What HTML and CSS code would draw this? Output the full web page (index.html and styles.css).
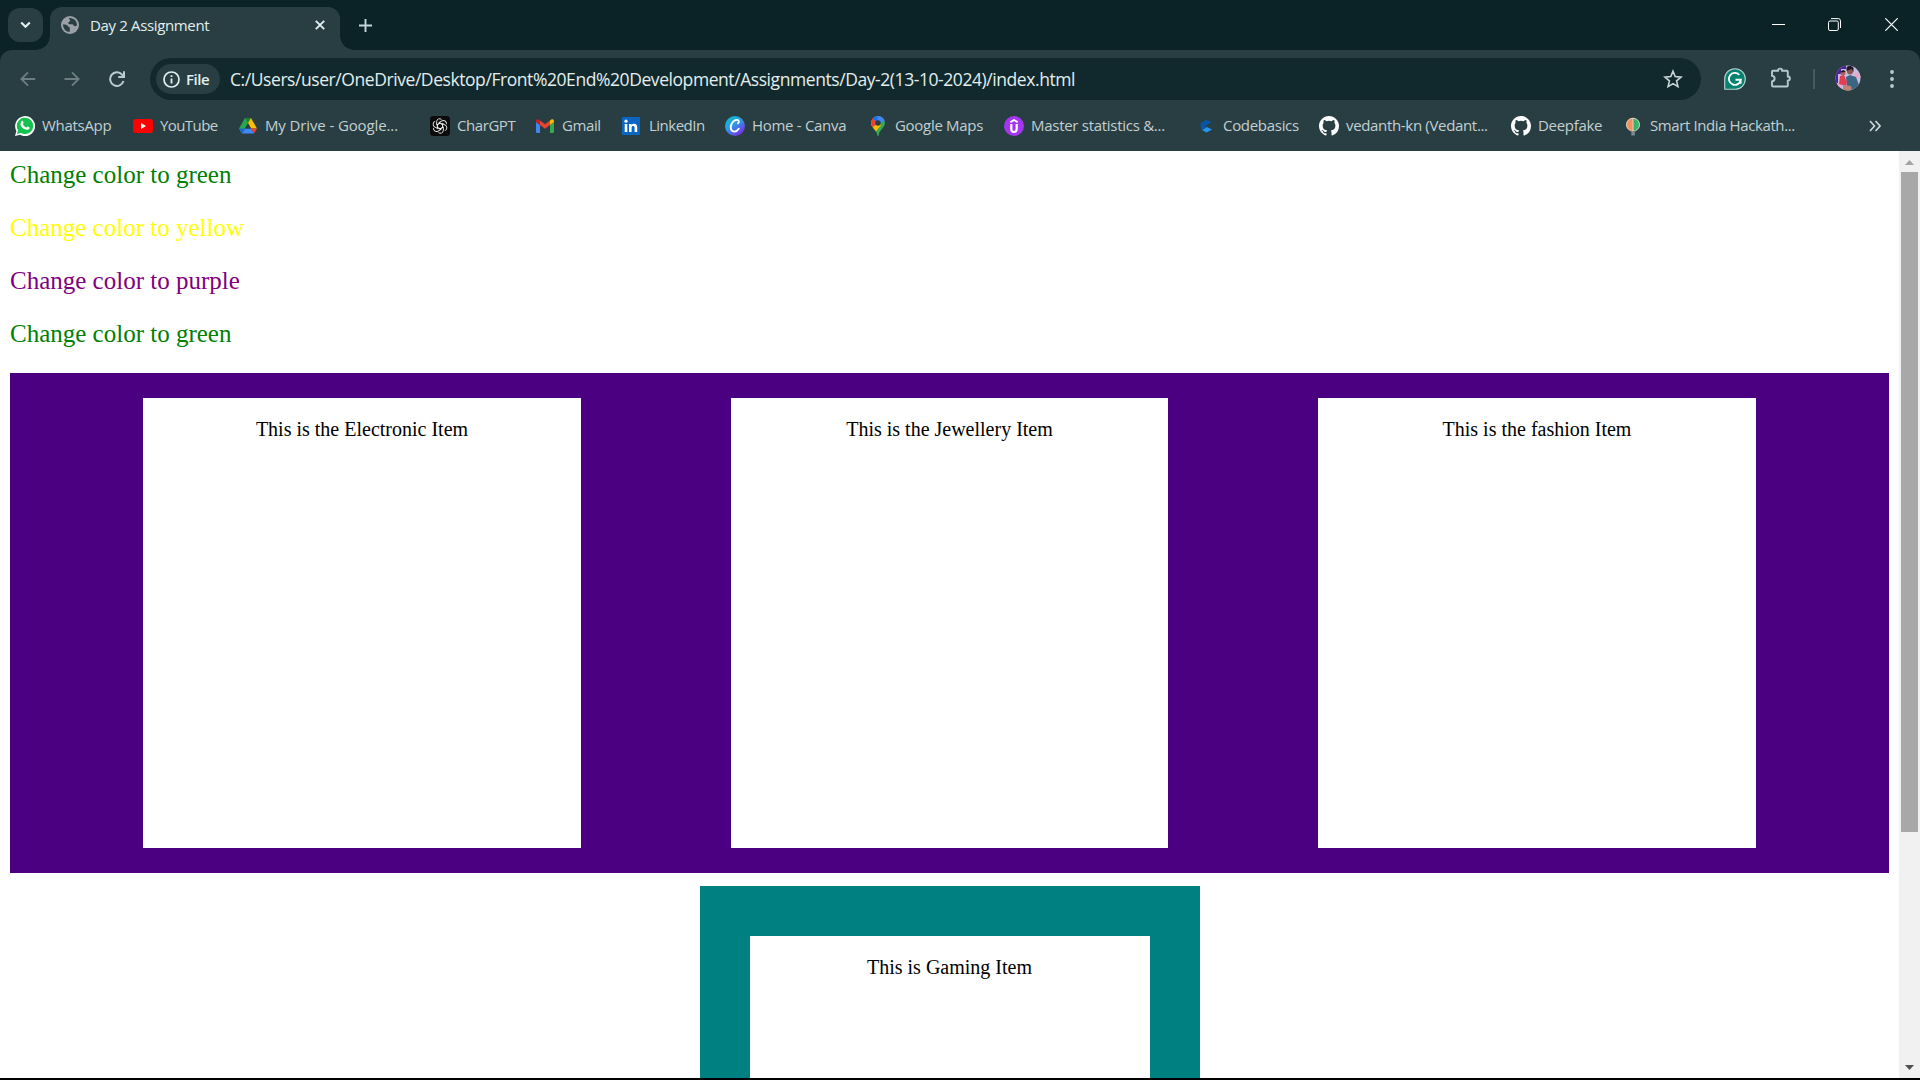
FILE: index.html
```html
<!DOCTYPE html>
<html lang="en">
<head>
<meta charset="utf-8">
<title>Day 2 Assignment</title>
<link rel="stylesheet" href="styles.css">
</head>
<body>
<div class="window">
  <header class="chrome">
    <div class="titlebar">
      <button class="tab-search" aria-label="Search tabs"><svg width="11" height="8" viewBox="0 0 11 8"><path d="M1.2 1.5 5.5 5.8 9.8 1.5" fill="none" stroke="#e3eeee" stroke-width="2.2"/></svg></button>
      <div class="tab">
        <svg class="tab-icon" width="18" height="18" viewBox="0 0 18 18"><circle cx="9" cy="9" r="9" fill="#9aa0a6"/><path d="M2 8.2c2.200.300 4.200.200 4.600 1.600.400 1.400 2.200.800 2.200 2.200v3.800C5 16 2 12.800 2 8.200zM8 2c-.2 1.700 1.300 1 1.200 2.500C9.100 6 7 5.600 7.300 7.200c.2 1.400 2.500.800 4 1 1.500.200 1.300 2 2.700 2 1 0 1.300-.6 2-.6C16.300 5.500 13 1.700 8 2z" fill="#283e43"/></svg>
        <span class="tab-title">Day 2 Assignment</span>
        <svg class="tab-close" width="10" height="10" viewBox="0 0 10 10"><path d="M.8.8l8.400 8.400M9.200.8.800 9.200" stroke="#e3eeee" stroke-width="1.900"/></svg>
      </div>
      <svg class="new-tab" width="13" height="13" viewBox="0 0 13 13"><path d="M6.500 0v13M0 6.500h13" stroke="#c3d6da" stroke-width="1.900"/></svg>
      <div class="controls">
        <svg width="13" height="13" viewBox="0 0 13 13"><path d="M0 6.500h13" stroke="#fff"/></svg>
        <svg width="13" height="13" viewBox="0 0 13 13"><rect x=".5" y="3" width="9.800" height="9.500" rx="1.500" fill="none" stroke="#fff"/><path d="M3 .6h7.200a2.300 2.300 0 0 1 2.300 2.300V10" fill="none" stroke="#fff"/></svg>
        <svg width="13" height="13" viewBox="0 0 13 13"><path d="M.3.3l12.400 12.400M12.700.3.300 12.700" stroke="#fff" stroke-width="1.200"/></svg>
      </div>
    </div>
    <div class="toolbar">
      <svg class="nav back" width="16" height="16" viewBox="0 0 16 16"><path d="M15.200 8H1.700M8 1.300 1.400 8 8 14.700" fill="none" stroke="#6c7e82" stroke-width="1.900"/></svg>
      <svg class="nav forward" width="16" height="16" viewBox="0 0 16 16"><path d="M.5 8H14M8 1.300 14.600 8 8 14.700" fill="none" stroke="#6c7e82" stroke-width="1.900"/></svg>
      <svg class="nav reload" width="16" height="16" viewBox="0 0 16 16"><path d="M14.500 10a6.800 6.800 0 1 1-1.500-6.500L15 5.500" fill="none" stroke="#b9cdd1" stroke-width="2"/><path d="M15 .3v5.800H9.300" fill="none" stroke="#b9cdd1" stroke-width="2"/></svg>
      <div class="omnibox">
        <div class="chip"><svg width="17" height="17" viewBox="0 0 17 17"><circle cx="8.500" cy="8.500" r="7.500" fill="none" stroke="#e3eeee" stroke-width="1.700"/><path d="M8.500 7.500v5M8.500 4.300v1.800" stroke="#e3eeee" stroke-width="1.800"/></svg><span class="file">File</span></div>
        <span class="url">C:/Users/user/OneDrive/Desktop/Front%20End%20Development/Assignments/Day-2(13-10-2024)/index.html</span>
        <svg class="star" width="20" height="20" viewBox="0 0 20 20"><path d="M10 2.200l2.200 5.400 5.800.5-4.400 3.800 1.300 5.700-4.900-3-4.900 3 1.300-5.700L2 8.100l5.800-.5z" fill="none" stroke="#cbd6d8" stroke-width="1.600"/></svg>
      </div>
      <svg class="grammarly" width="22" height="22" viewBox="0 0 22 22"><path d="M.7 21.300V11A10.300 10.300 0 1 1 11 21.300z" fill="#078170" stroke="#b9d5d3" stroke-width="1.100"/><path d="M15.300 6.800A6 6 0 1 0 16.800 11.800H11.500M16.600 11.800v4" fill="none" stroke="#fff" stroke-width="1.900"/></svg>
      <svg class="puzzle" width="22" height="22" viewBox="0 0 22 22"><path d="M2.500 3.700H8a2.100 2.100 0 0 1 4.200 0h4.600a1 1 0 0 1 1 1V9.500a2.100 2.100 0 0 1 0 4.200v4.800a1 1 0 0 1-1 1H3a1 1 0 0 1-1-1v-4c3.500-.5 3.500-5.300 0-5.800V4.700a1 1 0 0 1 1-1z" fill="none" stroke="#b2cbd1" stroke-width="1.900"/></svg>
      <span class="separator"></span>
      <svg class="avatar" width="26" height="26" viewBox="0 0 26 26"><clipPath id="face"><circle cx="13" cy="13" r="12.500"/></clipPath><g clip-path="url(#face)"><path fill="#c4bfe0" d="M0 0h26v26H0z"/><path fill="#50209a" d="M0 0h11v4H6v5H3v17H0z"/><path fill="#e7a8ca" d="M19 8h7v5h-5zM2 18h5v8H2z"/><path fill="#3b6681" d="M11 12l4-2 6 2 3 8-2 6h-6l-4-5z"/><path fill="#e33d50" d="M5 11l4-1 3 7-1 4-7-2z"/><circle cx="8" cy="8" r="2.500" fill="#a8655c"/><path fill="#211825" d="M5.500 7.500C6 4.500 10 4.500 10.500 7z"/><circle cx="15" cy="6.500" r="3" fill="#8f564f"/><path fill="#211825" d="M11.500 6V2.500C13 .5 17 .5 18.500 3v4l-2-3z"/><path fill="#c18174" d="M8 20l8 1 1 5H8z"/></g></svg>
      <svg class="dots" width="4" height="18" viewBox="0 0 4 18"><g fill="#b9cdd1"><circle cx="2" cy="2" r="1.900"/><circle cx="2" cy="9" r="1.900"/><circle cx="2" cy="16" r="1.900"/></g></svg>
    </div>
    <nav class="bookmarks">
      <div class="bm whatsapp"><svg viewBox="0 0 20 20"><path d="M0 20l1.400-5A10 10 0 1 1 5 18.700z" fill="#fff"/><path d="M2 18l1-3.800A8.200 8.200 0 1 1 5.900 17z" fill="#17c14f"/><path d="M6.500 5.200c1-.8 1.500-.2 2 1.500.2.700-.8 1.200-.5 1.700.9 1.500 1.900 2.400 3.300 3 .5.200 1-1.100 1.500-.9 1.800.8 2.200.9 1.600 2-.8 1.800-3.100 1.700-5.500.3-2.200-1.300-4.800-4.500-2.400-7.600z" fill="#fff"/></svg><span>WhatsApp</span></div>
      <div class="bm youtube"><svg viewBox="0 0 20 20"><rect y="3" width="20" height="14" rx="3" fill="#f00"/><path d="M8 7l5 3-5 3z" fill="#fff"/></svg><span>YouTube</span></div>
      <div class="bm drive"><svg viewBox="0 0 20 20"><path d="M7 2h6L4 17.500 1 12.500z" fill="#29a650"/><path d="M7 2h6l-3 5z" fill="#188038"/><path d="M13 2l6 10.500h-6L10 7z" fill="#fbbc04"/><path d="M4 17.500l3-5h6l3 5z" fill="#4285f4"/><path d="M1 12.500h6l-3 5z" fill="#1967d2"/><path d="M13 12.500h6l-3 5z" fill="#ea4335"/><path d="M10 7.500l3 5H7z" fill="#283e43"/></svg><span>My Drive - Google...</span></div>
      <div class="bm chatgpt"><svg viewBox="0 0 20 20"><rect width="20" height="20" rx="3.500" fill="#0b0b0b"/><g fill="none" stroke="#eee" stroke-width=".9"><path id="petal" d="M12.600 8.500 10 7 6.600 9V5.800A3 3 0 0 1 11.600 3.500"/><use href="#petal" transform="rotate(60 10 10)"/><use href="#petal" transform="rotate(120 10 10)"/><use href="#petal" transform="rotate(180 10 10)"/><use href="#petal" transform="rotate(240 10 10)"/><use href="#petal" transform="rotate(300 10 10)"/></g></svg><span>CharGPT</span></div>
      <div class="bm gmail"><svg viewBox="0 0 20 20"><path d="M1 6l4 3v8H2.200A1.200 1.200 0 0 1 1 15.800z" fill="#4285f4"/><path d="M19 6l-4 3v8h2.800a1.200 1.200 0 0 0 1.200-1.200z" fill="#34a853"/><path d="M5 4.500l5 3.800 5-3.800V9l-5 3.800L5 9z" fill="#ea4335"/><path d="M1 5.200C1 3.200 3 2.900 4 3.700l1 .8V9L1 6z" fill="#c5221f"/><path d="M19 5.200c0-2-2-2.300-3-1.500l-1 .8V9l4-3z" fill="#fbbc04"/></svg><span>Gmail</span></div>
      <div class="bm linkedin"><svg viewBox="0 0 20 20"><rect x="1" y="1" width="18" height="18" rx="1" fill="#0a66c2"/><path d="M3.700 8h2.600v8H3.700zM8 8h2.500v1.100c1.300-2 5.700-1.800 5.700 2V16h-2.600v-4.300c0-2.300-3-2.100-3 0V16H8z" fill="#fff"/><circle cx="5" cy="5.200" r="1.600" fill="#fff"/></svg><span>LinkedIn</span></div>
      <div class="bm canva"><svg viewBox="0 0 20 20"><defs><linearGradient id="cv" x1="0" y1="0" x2=".7" y2="1"><stop stop-color="#00c4cc"/><stop offset=".5" stop-color="#2e9be5"/><stop offset="1" stop-color="#7d2ae8"/></linearGradient></defs><circle cx="10" cy="10" r="10" fill="url(#cv)"/><path d="M12.900 7.400c1.600-1.200 1.200-3.600-1.100-3.500-4 .2-6.600 5.200-6 8.500.7 4 5.500 4.200 8 .4" fill="none" stroke="#fff" stroke-width="1.800" stroke-linecap="round"/></svg><span>Home - Canva</span></div>
      <div class="bm maps"><svg viewBox="0 0 20 20"><clipPath id="pin"><path d="M10 0a7 7 0 0 1 7 7c0 4.500-5.500 6.500-6.300 12.200-.2 1.100-1.200 1.100-1.400 0C8.500 13.500 3 11.500 3 7a7 7 0 0 1 7-7z"/></clipPath><g clip-path="url(#pin)"><path fill="#34a853" d="M0 0h20v20H0z"/><path fill="#fbbc04" d="M0 5l10 1 3 3-7 9H0z"/><path fill="#ea4335" d="M0 0h6l4 7-5 4-5-1z"/><path fill="#1a73e8" d="M4 2l4-3h4l-2 8z"/><path fill="#4285f4" d="M9-1h6l4 4-9 6z"/></g><circle cx="10" cy="7" r="2.700" fill="#283e43"/></svg><span>Google Maps</span></div>
      <div class="bm udemy"><svg viewBox="0 0 20 20"><circle cx="10" cy="10" r="10" fill="#a435f0"/><path d="M6.300 6.200L10 4l3.700 2.200" fill="none" stroke="#fff" stroke-width="1.900"/><path d="M7.300 8v5c0 4 5.400 4 5.400 0V8" fill="none" stroke="#fff" stroke-width="2.200"/></svg><span>Master statistics &amp;...</span></div>
      <div class="bm codebasics"><svg viewBox="0 0 20 20"><path d="M4.500 7L10 3.700 15.500 6 11 9 9.500 11.500 5 14z" fill="#0755a3"/><path d="M6 14l5-3 5 2.500-5.500 3z" fill="#2196f3"/></svg><span>Codebasics</span></div>
      <div class="bm github"><svg viewBox="0 0 16 16"><path id="octo" fill="#fff" d="M8 0C3.580 0 0 3.580 0 8c0 3.540 2.290 6.530 5.470 7.590.4.070.55-.17.55-.38 0-.19-.01-.82-.01-1.490-2.010.37-2.530-.49-2.690-.94-.09-.23-.48-.94-.82-1.130-.28-.15-.68-.52-.01-.53.63-.01 1.080.58 1.230.82.72 1.210 1.870.87 2.330.66.07-.52.28-.87.51-1.070-1.780-.2-3.640-.89-3.640-3.950 0-.87.31-1.590.82-2.150-.08-.2-.36-1.020.08-2.120 0 0 .67-.21 2.200.82a7.420 7.420 0 0 1 4 0c1.530-1.040 2.200-.82 2.200-.82.44 1.100.16 1.920.08 2.120.51.56.82 1.270.82 2.150 0 3.070-1.870 3.750-3.650 3.950.29.25.54.73.54 1.480 0 1.070-.01 1.930-.01 2.200 0 .21.15.46.55.38A8.010 8.010 0 0 0 16 8c0-4.420-3.580-8-8-8z"/></svg><span>vedanth-kn (Vedant...</span></div>
      <div class="bm deepfake"><svg viewBox="0 0 16 16"><use href="#octo"/></svg><span>Deepfake</span></div>
      <div class="bm sih"><svg viewBox="0 0 20 20"><path d="M10 2C6 2 3.300 5 3.300 8.500S6 15 10 15z" fill="#f0925e"/><path d="M10 2c4 0 6.700 3 6.700 6.500S14 15 10 15z" fill="#39b36b"/><path d="M10 2v13" stroke="#f3ede3" stroke-width=".7"/><circle cx="10" cy="8.700" r="6.500" fill="none" stroke="#dcdcd2" stroke-width=".9"/><path d="M8.300 16h3.600v3.500H8.300z" fill="#7c8b90"/></svg><span>Smart India Hackath...</span></div>
      <svg class="overflow" width="12" height="12" viewBox="0 0 12 12"><path d="M1 1l4.500 5L1 11M6.500 1 11 6l-4.500 5" fill="none" stroke="#cbd6d8" stroke-width="1.700"/></svg>
    </nav>
  </header>
  <div class="viewport">
    <main class="page">
      <p class="line green">Change color to green</p>
      <p class="line yellow">Change color to yellow</p>
      <p class="line purple">Change color to purple</p>
      <p class="line green">Change color to green</p>
      <section class="items">
        <div class="item"><p>This is the Electronic Item</p></div>
        <div class="item"><p>This is the Jewellery Item</p></div>
        <div class="item"><p>This is the fashion Item</p></div>
      </section>
      <section class="gaming"><div class="gaming-item"><p>This is Gaming Item</p></div></section>
    </main>
    <div class="scrollbar">
      <svg width="9" height="5" viewBox="0 0 9 5"><path d="M0 5l4.500-5L9 5z" fill="#a3a3a3"/></svg>
      <div class="thumb"></div>
      <svg class="down" width="9" height="5" viewBox="0 0 9 5"><path d="M0 0l4.500 5L9 0z" fill="#505050"/></svg>
    </div>
  </div>
</div>
</body>
</html>
```
FILE: styles.css
```css
* { box-sizing: border-box; }
body { margin: 0; background: #000; overflow: hidden; }
svg { display: block; flex: none; }
.window { width: 1920px; height: 1080px; display: flex; flex-direction: column; border-bottom: 2px solid #000; }
.chrome { height: 151px; flex: none; background: #0b2327; font-family: "Open Sans", "Noto Sans", sans-serif; color: #e3eeee; white-space: nowrap; }

.titlebar { height: 50px; display: flex; align-items: flex-start; }
.tab-search { width: 35px; height: 34px; margin: 8px 0 0 8px; padding: 0; border: 0; border-radius: 12px; background: #283e43; display: flex; align-items: center; justify-content: center; }
.tab { position: relative; width: 290px; height: 43px; margin: 7px 0 0 7px; padding: 0 15px 7px 11px; background: #283e43; border-radius: 12px 12px 0 0; display: flex; align-items: center; }
.tab::before, .tab::after { content: ""; position: absolute; bottom: 0; width: 14px; height: 14px; }
.tab::before { left: -14px; background: radial-gradient(circle at 0 0, transparent 13.5px, #283e43 14px); }
.tab::after { right: -14px; background: radial-gradient(circle at 100% 0, transparent 13.5px, #283e43 14px); }
.tab-title { margin-left: 11px; flex: 1; font-size: 15px; letter-spacing: -.35px; }
.new-tab { margin: 19px 0 0 19px; }
.controls { display: flex; gap: 44px; margin: 18px 22px 0 auto; }
.controls svg:first-child { margin-right: -1px; }

.toolbar { height: 58px; padding: 8px 25px 8px 20px; background: #283e43; border-radius: 12px 12px 0 0; display: flex; align-items: center; }
.forward { margin-left: 28px; }
.reload { margin-left: 29px; }
.omnibox { width: 1551px; height: 42px; margin-left: 25px; padding: 0 18px 0 6px; border-radius: 21px; background: #11292d; display: flex; align-items: center; }
.chip { width: 64px; height: 30px; padding-left: 7px; border-radius: 15px; background: #283e43; display: flex; align-items: center; }
.file { margin-left: 6px; padding-bottom: 1px; font-size: 15px; font-weight: 600; letter-spacing: -.45px; }
.url { margin-left: 10px; font-size: 17.500px; letter-spacing: -.430px; }
.star { margin-left: auto; }
.grammarly { margin-left: 23px; }
.puzzle { margin-left: 24px; margin-top: -3px; }
.separator { width: 2px; height: 20px; margin-left: 21px; background: #425b60; }
.avatar { margin-left: 20px; margin-top: -2px; }
.dots { margin-left: 29px; }

.bookmarks { height: 43px; padding: 0 39px 7px 15px; background: #283e43; display: flex; align-items: center; color: #c3cfd1; font-size: 15px; letter-spacing: -.3px; }
.bm { display: flex; align-items: center; gap: 7px; flex: none; }
.bm svg { width: 20px; height: 20px; }
.bm span { padding-bottom: 2px; }
.whatsapp { width: 118px; }
.youtube { width: 105px; letter-spacing: -.580px; }
.drive { width: 192px; letter-spacing: -.120px; }
.chatgpt { width: 105px; letter-spacing: -.430px; }
.gmail { width: 86px; letter-spacing: -.400px; }
.linkedin { width: 104px; gap: 8px; letter-spacing: -.500px; }
.canva { width: 143px; }
.maps { width: 136px; }
.udemy { width: 192px; letter-spacing: -.280px; }
.codebasics { width: 123px; }
.github { width: 192px; letter-spacing: -.330px; }
.deepfake { width: 112px; }
.sih { width: 172px; letter-spacing: -.400px; }
.overflow { margin-left: auto; }

.viewport { flex: 1; min-height: 0; display: flex; background: #fff; overflow: hidden; }
.page { width: 1899px; height: 927px; padding: 10px; overflow: hidden; font-family: "Liberation Serif", "Times New Roman", serif; }
.line { margin: 0 0 25px; font-size: 25px; line-height: 28px; }
.green { color: green; }
.yellow { color: yellow; }
.purple { color: purple; }
.items { height: 500px; background: indigo; display: flex; justify-content: center; gap: 150px; padding: 25px; }
.item { width: 437.500px; height: 450px; }
.item, .gaming-item { background: #fff; text-align: center; font-size: 20px; line-height: 23px; overflow: hidden; }
.item p, .gaming-item p { margin: 20px 0; }
.gaming { width: 500px; height: 500px; margin: 13px auto 0; padding: 50px; background: teal; }
.gaming-item { height: 400px; }

.scrollbar { width: 21px; flex: none; background: #f1f1f1; display: flex; flex-direction: column; align-items: center; padding: 9px 1px 8px 0; }
.thumb { width: 17px; height: 660px; margin-top: 7px; margin-left: 1px; background: #a8a8a8; }
.down { margin-top: auto; }
```
